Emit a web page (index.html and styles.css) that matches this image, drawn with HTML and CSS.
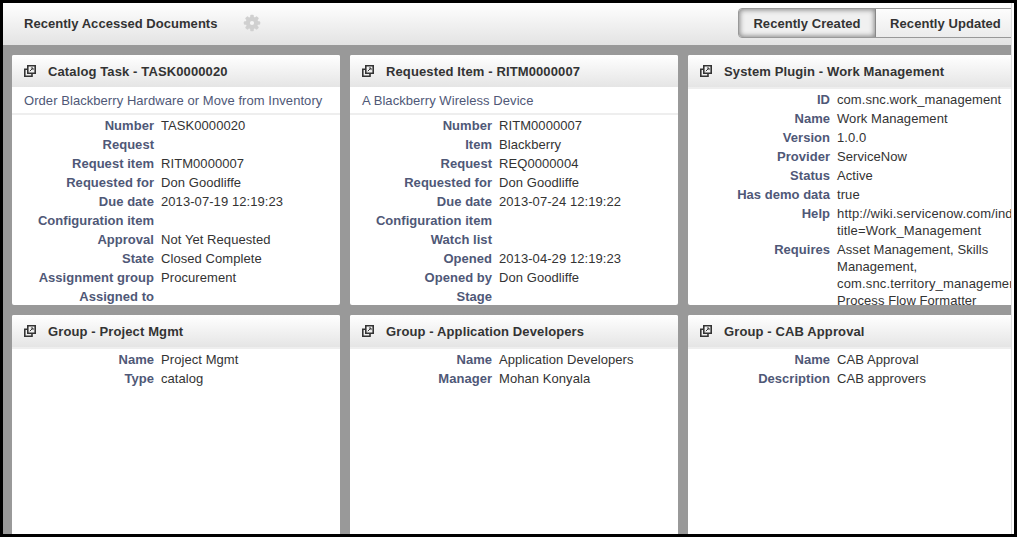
FILE: index.html
```
<!DOCTYPE html>
<html lang="en">
<head>
<meta charset="utf-8">
<title>Recently Accessed Documents</title>
<link rel="stylesheet" href="styles.css">
</head>
<body>
<svg class="defs" width="0" height="0">
  <symbol id="popout" viewBox="0 0 12 12">
    <path d="M3.8 .8h7.4v7.4H3.8zM3.8 4.3H.8V11.2h7.2V8" fill="none" stroke="#343434" stroke-width="1.6"/>
    <path d="M5.8 6.2L8.6 3.4M6.9 3h2.1v2.1" fill="none" stroke="#343434" stroke-width="1"/>
  </symbol>
</svg>
<div class="frame">
  <main class="dashboard">
    <header class="topbar">
      <h1>Recently Accessed Documents</h1>
      <svg class="gear" viewBox="0 0 18 18">
        <g fill="#d0d0d0">
          <rect x="7.2" y="0.8" width="3.6" height="16.4" rx="1"/>
          <rect x="7.2" y="0.8" width="3.6" height="16.4" rx="1" transform="rotate(45 9 9)"/>
          <rect x="7.2" y="0.8" width="3.6" height="16.4" rx="1" transform="rotate(90 9 9)"/>
          <rect x="7.2" y="0.8" width="3.6" height="16.4" rx="1" transform="rotate(135 9 9)"/>
          <circle cx="9" cy="9" r="6.2"/>
        </g>
        <circle cx="9" cy="9" r="2.1" fill="#f5f5f5"/>
      </svg>
      <div class="tabs">
        <button class="tab active">Recently Created</button>
        <button class="tab">Recently Updated</button>
      </div>
    </header>
    <div class="cards">
      <section class="card has-summary">
        <h2><svg class="icon"><use href="#popout"/></svg><span>Catalog Task - TASK0000020</span></h2>
        <p class="summary">Order Blackberry Hardware or Move from Inventory</p>
        <dl>
          <dt>Number</dt><dd>TASK0000020</dd>
          <dt>Request</dt><dd></dd>
          <dt>Request item</dt><dd>RITM0000007</dd>
          <dt>Requested for</dt><dd>Don Goodliffe</dd>
          <dt>Due date</dt><dd>2013-07-19 12:19:23</dd>
          <dt>Configuration item</dt><dd></dd>
          <dt>Approval</dt><dd>Not Yet Requested</dd>
          <dt>State</dt><dd>Closed Complete</dd>
          <dt>Assignment group</dt><dd>Procurement</dd>
          <dt>Assigned to</dt><dd></dd>
        </dl>
      </section>
      <section class="card has-summary">
        <h2><svg class="icon"><use href="#popout"/></svg><span>Requested Item - RITM0000007</span></h2>
        <p class="summary">A Blackberry Wireless Device</p>
        <dl>
          <dt>Number</dt><dd>RITM0000007</dd>
          <dt>Item</dt><dd>Blackberry</dd>
          <dt>Request</dt><dd>REQ0000004</dd>
          <dt>Requested for</dt><dd>Don Goodliffe</dd>
          <dt>Due date</dt><dd>2013-07-24 12:19:22</dd>
          <dt>Configuration item</dt><dd></dd>
          <dt>Watch list</dt><dd></dd>
          <dt>Opened</dt><dd>2013-04-29 12:19:23</dd>
          <dt>Opened by</dt><dd>Don Goodliffe</dd>
          <dt>Stage</dt><dd></dd>
        </dl>
      </section>
      <section class="card">
        <h2><svg class="icon"><use href="#popout"/></svg><span>System Plugin - Work Management</span></h2>
        <dl>
          <dt>ID</dt><dd>com.snc.work_management</dd>
          <dt>Name</dt><dd>Work Management</dd>
          <dt>Version</dt><dd>1.0.0</dd>
          <dt>Provider</dt><dd>ServiceNow</dd>
          <dt>Status</dt><dd>Active</dd>
          <dt>Has demo data</dt><dd>true</dd>
          <dt>Help</dt><dd class="url">http://wiki.servicenow.com/index<br>title=Work_Management</dd>
          <dt>Requires</dt><dd>Asset Management, Skills<br>Management,<br><span class="url">com.snc.territory_management,</span><br>Process Flow Formatter</dd>
        </dl>
      </section>
      <section class="card">
        <h2><svg class="icon"><use href="#popout"/></svg><span>Group - Project Mgmt</span></h2>
        <dl>
          <dt>Name</dt><dd>Project Mgmt</dd>
          <dt>Type</dt><dd>catalog</dd>
        </dl>
      </section>
      <section class="card">
        <h2><svg class="icon"><use href="#popout"/></svg><span>Group - Application Developers</span></h2>
        <dl>
          <dt>Name</dt><dd>Application Developers</dd>
          <dt>Manager</dt><dd>Mohan Konyala</dd>
        </dl>
      </section>
      <section class="card">
        <h2><svg class="icon"><use href="#popout"/></svg><span>Group - CAB Approval</span></h2>
        <dl>
          <dt>Name</dt><dd>CAB Approval</dd>
          <dt>Description</dt><dd>CAB approvers</dd>
        </dl>
      </section>
    </div>
  </main>
</div>
</body>
</html>
```
FILE: styles.css
```
* { box-sizing: border-box; }
body, h1, h2, p, dl, dd { margin: 0; }
body {
  overflow: hidden;
  font: 13px/17px "Liberation Sans", Arial, sans-serif;
  color: #333;
}
.defs { position: absolute; }
.frame {
  width: 1017px;
  height: 537px;
  border: 3px solid #000;
  padding-right: 2px;
  background: #fff;
}
.dashboard {
  height: 531px;
  overflow: hidden;
  border-right: 1px solid #ddd;
  background: #999;
}
.topbar {
  display: flex;
  align-items: center;
  width: 1050px;
  height: 42px;
  padding: 0 0 2px 21px;
  background: linear-gradient(#fff, #e3e3e3);
}
h1, h2 { font-size: 13px; line-height: 17px; font-weight: bold; white-space: nowrap; }
h1 { width: 219px; letter-spacing: .04px; }
.gear { width: 18px; height: 18px; }
.tabs {
  display: flex;
  margin-left: 477px;
  height: 30px;
  width: 290px;
  border: 1px solid #999;
  border-radius: 4px;
  flex: none;
}
.tab {
  border: 0;
  padding: 0;
  width: 139px;
  background: linear-gradient(#fdfdfd, #ececec);
  color: #333;
  font: bold 13px/17px "Liberation Sans", Arial, sans-serif;
  letter-spacing: .06px;
}
.tab.active {
  width: 137px;
  border-right: 1px solid #888;
  border-radius: 3px 0 0 3px;
  background: #f0f0f0;
  box-shadow: inset 0 0 5px 1px #888;
}
.cards {
  display: grid;
  grid-template-columns: repeat(3, 328px);
  grid-auto-rows: 250px;
  gap: 10px;
  padding: 10px 9px;
}
.card { overflow: hidden; border-radius: 2px; background: #fff; }
h2 {
  display: flex;
  align-items: center;
  gap: 12px;
  height: 34px;
  padding: 0 12px;
  border-bottom: 2px solid #eee;
  background: linear-gradient(#fff, #e5e5e5);
  letter-spacing: .12px;
}
.icon { width: 12px; height: 12px; flex: none; margin-top: -1px; }
.has-summary h2 { height: 32px; border-bottom: 0; }
.summary {
  height: 28px;
  padding: 5px 12px 0;
  border-bottom: 2px solid #eee;
  color: #4f5877;
  white-space: nowrap;
  letter-spacing: .06px;
}
dl {
  display: grid;
  grid-template-columns: 142px 172px;
  column-gap: 7px;
  row-gap: 2px;
  padding-top: 2px;
}
dt { text-align: right; font-weight: bold; color: #4f5877; letter-spacing: .03px; }
dd { min-height: 17px; white-space: nowrap; letter-spacing: .07px; }
.url { letter-spacing: .15px; }
```
